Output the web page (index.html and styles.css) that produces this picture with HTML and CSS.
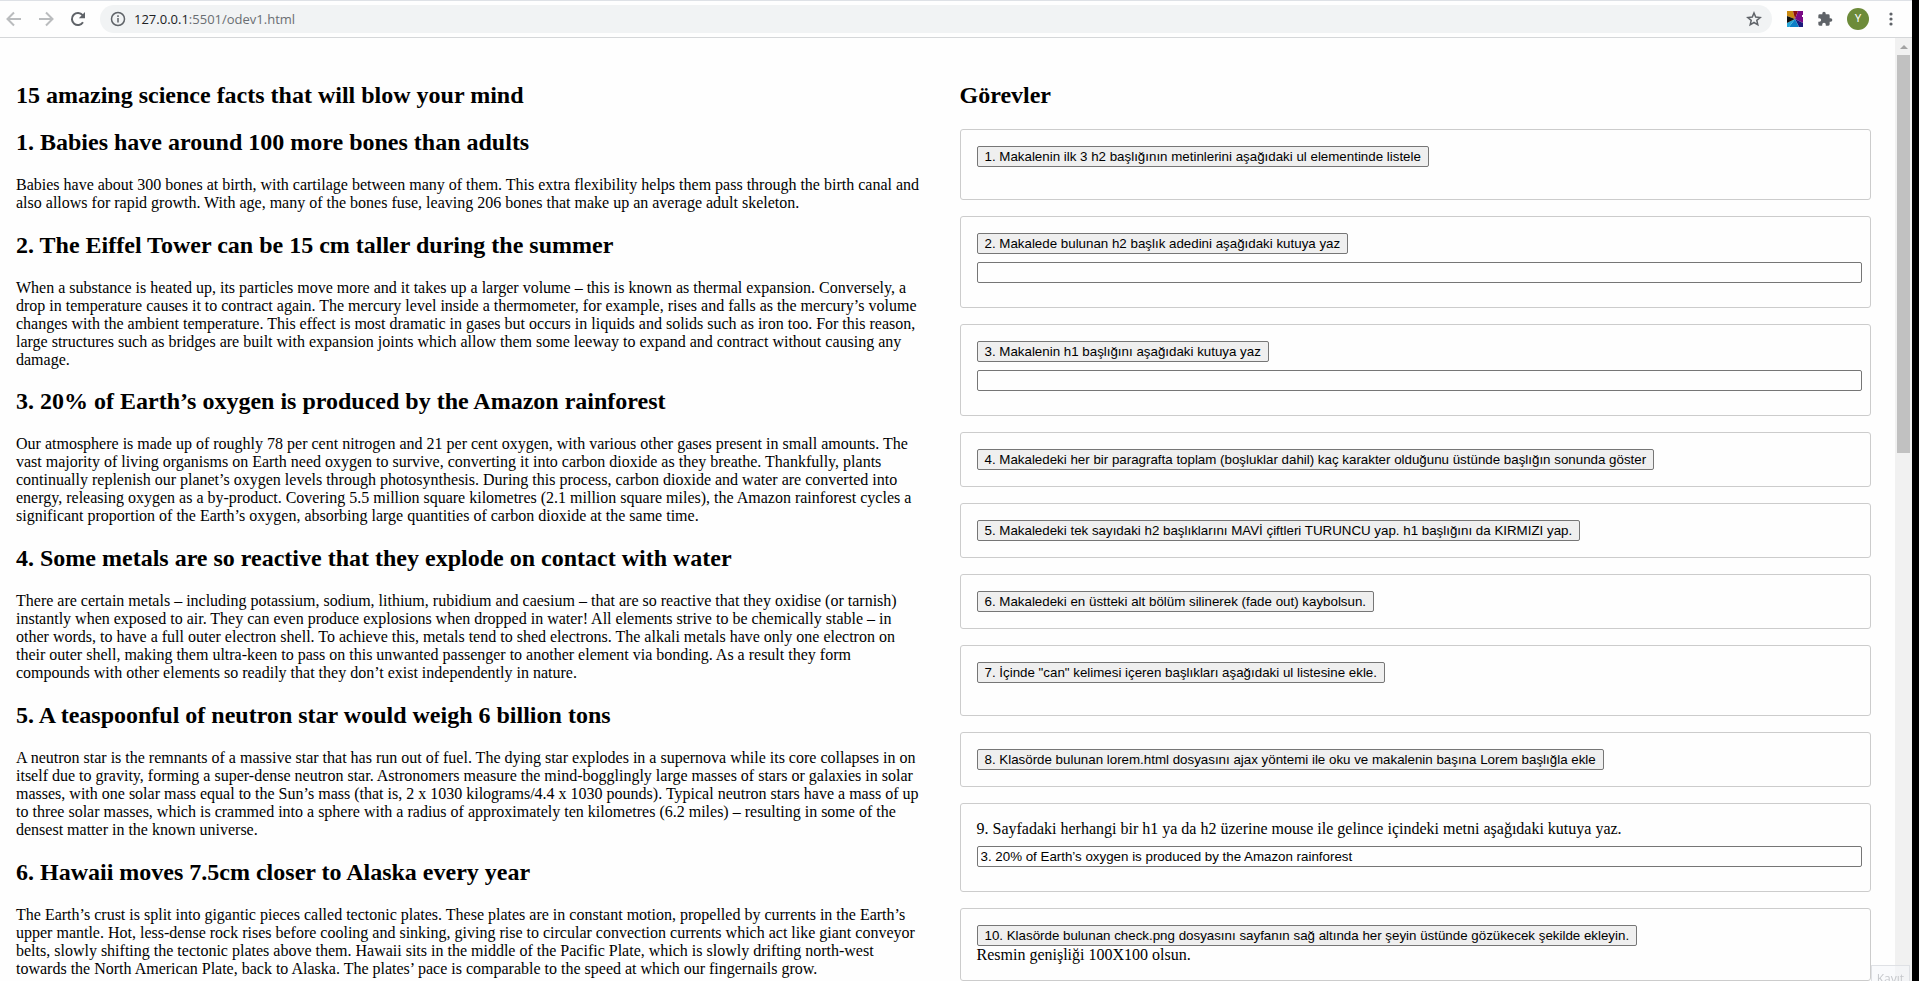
FILE: index.html
```html
<!DOCTYPE html>
<html lang="tr">
<head>
<meta charset="utf-8">
<title>odev1</title>
<link rel="stylesheet" href="styles.css">
</head>
<body>
<div class="browser">
  <header class="toolbar">
    <nav class="nav">
      <button class="icon-button" aria-label="Geri"><svg class="icon muted" viewBox="0 0 16 16"><path d="M15 8H2M8 1.500L1.500 8L8 14.500"/></svg></button>
      <button class="icon-button" aria-label="İleri"><svg class="icon muted" viewBox="0 0 16 16"><path d="M1 8H14M8 1.500L14.500 8L8 14.500"/></svg></button>
      <button class="icon-button" aria-label="Yenile"><svg class="icon" viewBox="0 0 16 16"><path d="M13 11.200A6 6 0 1 1 12.600 4.200L14 5.800"/><path class="solid" d="M15 1V7.200H8.800Z"/></svg></button>
    </nav>
    <div class="address">
      <svg class="icon info" viewBox="0 0 16 16"><circle cx="8" cy="8" r="6.500"/><path d="M8 7V11.600M8 4.300V6"/></svg>
      <span class="url"><span class="host">127.0.0.1</span>:5501/odev1.html</span>
      <button class="icon-button star" aria-label="Yer işareti"><svg class="icon thin" viewBox="0 0 16 16"><path d="M8 2L9.700 6.100L14.200 6.500L10.800 9.400L11.800 13.800L8 11.500L4.200 13.800L5.200 9.400L1.800 6.500L6.300 6.100Z"/></svg></button>
    </div>
    <div class="actions">
      <button class="icon-button" aria-label="Uzantı"><svg class="icon tile" viewBox="0 0 16 16"><path fill="#c98a12" d="M0 0H6L8 8L0 5Z"/><path fill="#8c1010" d="M6 0H11L8 8Z"/><path fill="#7a0a86" d="M11 0H16V12L8 8Z"/><path fill="#1c1a7c" d="M16 12V16H12L8 8Z"/><path fill="#0e7fc6" d="M12 16H2L8 8Z"/><path fill="#25a6d8" d="M0 12L8 8L2 16H0Z"/><path fill="#101010" d="M0 5L8 8L0 12Z"/><path fill="#fff" d="M15 4H16V6H15Z"/></svg></button>
      <button class="icon-button" aria-label="Uzantılar"><svg class="icon puzzle" viewBox="0 0 24 24"><path d="M20.500 11H19V7a2 2 0 0 0-2-2h-4V3.500a2.500 2.500 0 0 0-5 0V5H4a2 2 0 0 0-2 2v3.800h1.500a2.700 2.700 0 0 1 0 5.400H2V20a2 2 0 0 0 2 2h3.800v-1.500a2.700 2.700 0 0 1 5.400 0V22H17a2 2 0 0 0 2-2v-4h1.500a2.500 2.500 0 0 0 0-5z"/></svg></button>
      <button class="avatar">Y</button>
      <button class="icon-button" aria-label="Menü"><svg class="icon dots" viewBox="0 0 16 16"><circle cx="8" cy="3" r="1.600"/><circle cx="8" cy="8" r="1.600"/><circle cx="8" cy="13" r="1.600"/></svg></button>
    </div>
  </header>
  <div class="viewport">
    <main class="page">
      <article class="column">
        <h1>15 amazing science facts that will blow your mind</h1>
        <h2>1. Babies have around 100 more bones than adults</h2>
        <p>Babies have about 300 bones at birth, with cartilage between many of them. This extra flexibility helps them pass through the birth canal and also allows for rapid growth. With age, many of the bones fuse, leaving 206 bones that make up an average adult skeleton.</p>
        <h2>2. The Eiffel Tower can be 15 cm taller during the summer</h2>
        <p>When a substance is heated up, its particles move more and it takes up a larger volume – this is known as thermal expansion. Conversely, a drop in temperature causes it to contract again. The mercury level inside a thermometer, for example, rises and falls as the mercury’s volume changes with the ambient temperature. This effect is most dramatic in gases but occurs in liquids and solids such as iron too. For this reason, large structures such as bridges are built with expansion joints which allow them some leeway to expand and contract without causing any damage.</p>
        <h2>3. 20% of Earth’s oxygen is produced by the Amazon rainforest</h2>
        <p>Our atmosphere is made up of roughly 78 per cent nitrogen and 21 per cent oxygen, with various other gases present in small amounts. The vast majority of living organisms on Earth need oxygen to survive, converting it into carbon dioxide as they breathe. Thankfully, plants continually replenish our planet’s oxygen levels through photosynthesis. During this process, carbon dioxide and water are converted into energy, releasing oxygen as a by-product. Covering 5.5 million square kilometres (2.1 million square miles), the Amazon rainforest cycles a significant proportion of the Earth’s oxygen, absorbing large quantities of carbon dioxide at the same time.</p>
        <h2>4. Some metals are so reactive that they explode on contact with water</h2>
        <p>There are certain metals – including potassium, sodium, lithium, rubidium and caesium – that are so reactive that they oxidise (or tarnish) instantly when exposed to air. They can even produce explosions when dropped in water! All elements strive to be chemically stable – in other words, to have a full outer electron shell. To achieve this, metals tend to shed electrons. The alkali metals have only one electron on their outer shell, making them ultra-keen to pass on this unwanted passenger to another element via bonding. As a result they form compounds with other elements so readily that they don’t exist independently in nature.</p>
        <h2>5. A teaspoonful of neutron star would weigh 6 billion tons</h2>
        <p>A neutron star is the remnants of a massive star that has run out of fuel. The dying star explodes in a supernova while its core collapses in on itself due to gravity, forming a super-dense neutron star. Astronomers measure the mind-bogglingly large masses of stars or galaxies in solar masses, with one solar mass equal to the Sun’s mass (that is, 2 x 1030 kilograms/4.4 x 1030 pounds). Typical neutron stars have a mass of up to three solar masses, which is crammed into a sphere with a radius of approximately ten kilometres (6.2 miles) – resulting in some of the densest matter in the known universe.</p>
        <h2>6. Hawaii moves 7.5cm closer to Alaska every year</h2>
        <p>The Earth’s crust is split into gigantic pieces called tectonic plates. These plates are in constant motion, propelled by currents in the Earth’s upper mantle. Hot, less-dense rock rises before cooling and sinking, giving rise to circular convection currents which act like giant conveyor belts, slowly shifting the tectonic plates above them. Hawaii sits in the middle of the Pacific Plate, which is slowly drifting north-west towards the North American Plate, back to Alaska. The plates’ pace is comparable to the speed at which our fingernails grow.</p>
      </article>
      <section class="column">
        <h1>Görevler</h1>
        <div class="task"><button class="run">1. Makalenin ilk 3 h2 başlığının metinlerini aşağıdaki ul elementinde listele</button><ul class="list"></ul></div>
        <div class="task"><button class="run">2. Makalede bulunan h2 başlık adedini aşağıdaki kutuya yaz</button><input class="box" type="text" aria-label="h2 başlık adedi"></div>
        <div class="task"><button class="run">3. Makalenin h1 başlığını aşağıdaki kutuya yaz</button><input class="box" type="text" aria-label="h1 başlığı"></div>
        <div class="task"><button class="run">4. Makaledeki her bir paragrafta toplam (boşluklar dahil) kaç karakter olduğunu üstünde başlığın sonunda göster</button></div>
        <div class="task"><button class="run">5. Makaledeki tek sayıdaki h2 başlıklarını MAVİ çiftleri TURUNCU yap. h1 başlığını da KIRMIZI yap.</button></div>
        <div class="task"><button class="run">6. Makaledeki en üstteki alt bölüm silinerek (fade out) kaybolsun.</button></div>
        <div class="task"><button class="run">7. İçinde "can" kelimesi içeren başlıkları aşağıdaki ul listesine ekle.</button><ul class="list"></ul></div>
        <div class="task"><button class="run">8. Klasörde bulunan lorem.html dosyasını ajax yöntemi ile oku ve makalenin başına Lorem başlığla ekle</button></div>
        <div class="task"><label for="hovered">9. Sayfadaki herhangi bir h1 ya da h2 üzerine mouse ile gelince içindeki metni aşağıdaki kutuya yaz.</label><input class="box" id="hovered" type="text" value="3. 20% of Earth’s oxygen is produced by the Amazon rainforest"></div>
        <div class="task"><button class="run">10. Klasörde bulunan check.png dosyasını sayfanın sağ altında her şeyin üstünde gözükecek şekilde ekleyin.</button><span>Resmin genişliği 100X100 olsun.</span></div>
      </section>
    </main>
    <div class="scrollbar"><span class="arrow"></span><span class="thumb"></span></div>
  </div>
</div>
<div class="recording">Kayıt</div>
</body>
</html>
```
FILE: styles.css
```css
* { box-sizing: border-box; }
body {
  margin: 0;
  height: 100vh;
  overflow: hidden;
  background: #000;
  color: #000;
  font: 16px/18px "Liberation Serif", "Times New Roman", serif;
}
.browser {
  display: flex;
  flex-direction: column;
  height: 100%;
  margin-right: 7px;
  background: #fefefe;
}
.toolbar {
  display: flex;
  align-items: center;
  flex: none;
  height: 38px;
  border-top: 1px solid #dee1e6;
  border-bottom: 1px solid #d5d7d9;
}
.nav { display: flex; gap: 16px; padding: 0 14px 0 6px; }
.icon-button {
  display: flex;
  padding: 0;
  border: 0;
  background: none;
}
.icon {
  width: 16px;
  height: 16px;
  fill: none;
  stroke: #5f6368;
  stroke-width: 2;
}
.muted { stroke: #babcbe; }
.thin { stroke-width: 1.5; }
.solid { fill: #5f6368; stroke: none; }
.tile { stroke: none; }
.puzzle, .dots { fill: #5f6368; stroke: none; }
.address {
  display: flex;
  align-items: center;
  flex: 1;
  gap: 8px;
  height: 28px;
  padding: 0 10px;
  border-radius: 14px;
  background: #f1f3f4;
}
.info { stroke-width: 1.5; }
.url {
  flex: 1;
  color: #6a6e72;
  font: 13px/20px "Open Sans", "Noto Sans", sans-serif;
  font-size: 13px;
}
.host { color: #202124; }
.actions {
  display: flex;
  align-items: center;
  gap: 14px;
  padding: 0 13px 0 15px;
}
.avatar {
  width: 22px;
  height: 22px;
  padding: 0;
  border: 0;
  border-radius: 50%;
  background: #6d8b3a;
  color: #fff;
  font: 11px/22px Roboto, sans-serif;
}
.viewport { display: flex; flex: 1; min-height: 0; }
.page {
  display: flex;
  flex: 1;
  gap: 32px;
  padding: 24px 24px 0 16px;
  overflow: hidden;
}
.column { flex: 1; min-width: 0; }
h1, h2 { margin: 0.83em 0; font-size: 24px; line-height: 27px; }
p { margin: 0; }
.task {
  display: flex;
  flex-direction: column;
  align-items: flex-start;
  margin-bottom: 16px;
  padding: 16px;
  border: 1px solid #ccc;
  border-radius: 3px;
}
.run, .box {
  height: 21px;
  border: 1px solid #767676;
  border-radius: 2px;
  color: #000;
  font-family: "Liberation Sans", Arial, sans-serif;
}
.run { padding: 0 7px; background: #efefef; }
.box {
  align-self: stretch;
  margin: 8px -8px 8px 0;
  padding: 0 3px;
  background: #fefefe;
}
.list { margin: 16px 0 0; }
.scrollbar {
  display: flex;
  flex-direction: column;
  align-items: center;
  width: 17px;
  background: #f1f1f1;
}
.arrow {
  margin: 7px 0 6px;
  border: 4px solid transparent;
  border-top: 0;
  border-bottom-color: #a3a3a3;
}
.thumb { width: 13px; height: calc(42% + 2px); background: #c1c1c1; }
.recording {
  position: fixed;
  right: 9px;
  bottom: -12px;
  padding: 4px 5px;
  border: 1px solid #dfe1e5;
  background: rgba(245, 246, 250, 0.6);
  color: #c6c8cc;
  font: 12px/18px "Open Sans", sans-serif;
}
```
